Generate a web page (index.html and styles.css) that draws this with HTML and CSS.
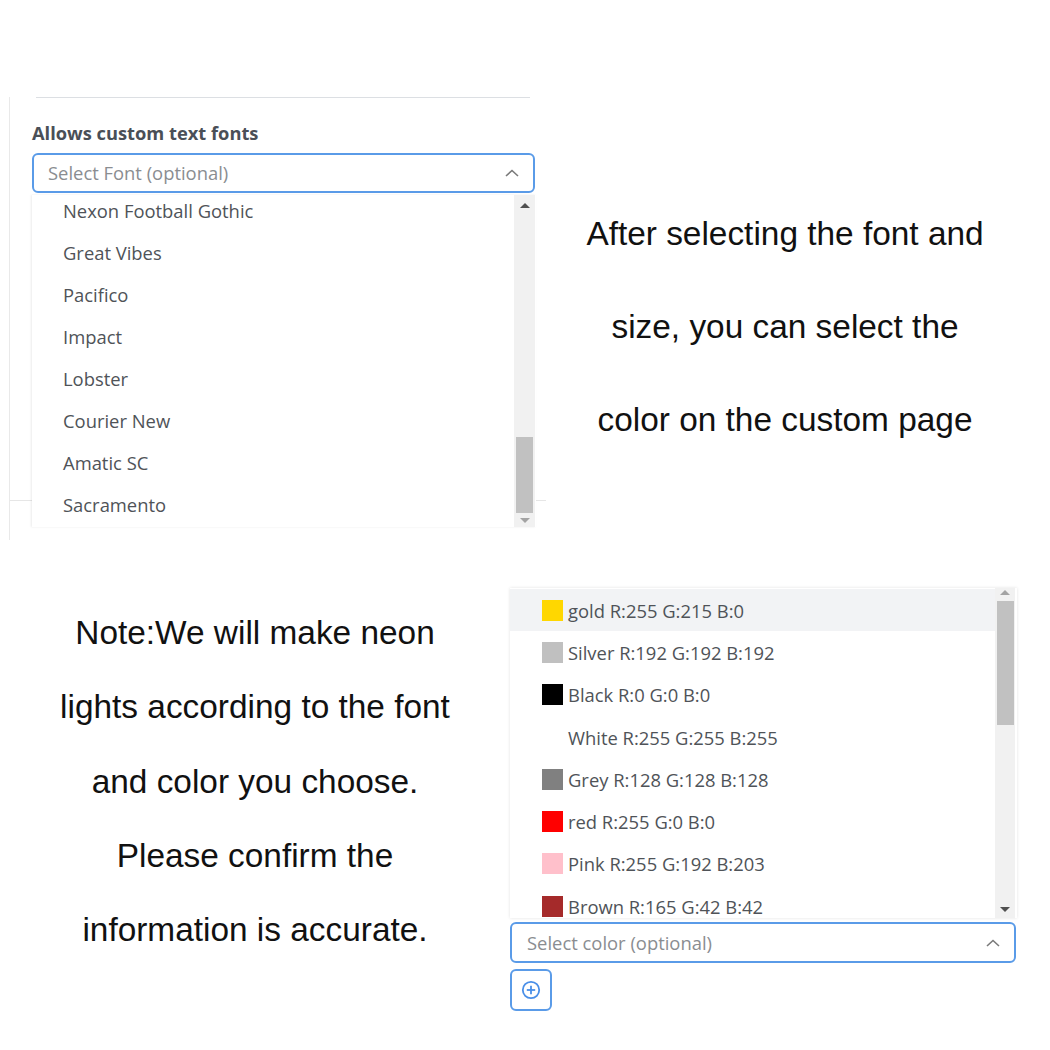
FILE: index.html
```html
<!DOCTYPE html>
<html lang="en">
<head>
<meta charset="utf-8">
<title>Custom fonts and colours</title>
<link rel="stylesheet" href="styles.css">
</head>
<body>
<div class="page">
  <section class="row row-top">
    <div class="font-panel">
      <div class="rule-top"></div>
      <div class="field-label">Allows custom text fonts</div>
      <div class="select select-font">
        <span class="placeholder">Select Font (optional)</span>
        <svg class="chevron" width="14" height="8" viewBox="0 0 14 8"><polyline points="1,7 7,1.5 13,7" fill="none" stroke="#7a7a7a" stroke-width="1.6"/></svg>
      </div>
      <div class="rule-bottom"></div>
      <div class="dropdown font-dropdown">
        <ul class="options font-options">
          <li>Nexon Football Gothic</li>
          <li>Great Vibes</li>
          <li>Pacifico</li>
          <li>Impact</li>
          <li>Lobster</li>
          <li>Courier New</li>
          <li>Amatic SC</li>
          <li>Sacramento</li>
        </ul>
        <div class="scrollbar font-scroll">
          <span class="arrow arrow-up dark"></span>
          <span class="thumb"></span>
          <span class="arrow arrow-down light"></span>
        </div>
      </div>
    </div>
    <div class="blurb blurb-top">
      <p>After selecting the font and</p>
      <p>size, you can select the</p>
      <p>color on the custom page</p>
    </div>
  </section>
  <section class="row row-bottom">
    <div class="blurb blurb-bottom">
      <p>Note:We will make neon</p>
      <p>lights according to the font</p>
      <p>and color you choose.</p>
      <p>Please confirm the</p>
      <p>information is accurate.</p>
    </div>
    <div class="color-panel">
      <div class="dropdown color-dropdown">
        <ul class="options color-options">
          <li class="active"><span class="swatch sw-gold"></span>gold R:255 G:215 B:0</li>
          <li><span class="swatch sw-silver"></span>Silver R:192 G:192 B:192</li>
          <li><span class="swatch sw-black"></span>Black R:0 G:0 B:0</li>
          <li><span class="swatch sw-white"></span>White R:255 G:255 B:255</li>
          <li><span class="swatch sw-grey"></span>Grey R:128 G:128 B:128</li>
          <li><span class="swatch sw-red"></span>red R:255 G:0 B:0</li>
          <li><span class="swatch sw-pink"></span>Pink R:255 G:192 B:203</li>
          <li><span class="swatch sw-brown"></span>Brown R:165 G:42 B:42</li>
        </ul>
        <div class="scrollbar color-scroll">
          <span class="arrow arrow-up light"></span>
          <span class="thumb"></span>
          <span class="arrow arrow-down dark"></span>
        </div>
      </div>
      <div class="select select-color">
        <span class="placeholder">Select color (optional)</span>
        <svg class="chevron" width="14" height="8" viewBox="0 0 14 8"><polyline points="1,7 7,1.5 13,7" fill="none" stroke="#7a7a7a" stroke-width="1.6"/></svg>
      </div>
      <div class="add-btn">
        <svg width="20" height="20" viewBox="0 0 20 20"><circle cx="10" cy="10" r="8.2" fill="none" stroke="#4a8fe8" stroke-width="1.8"/><line x1="10" y1="5.8" x2="10" y2="14.2" stroke="#4a8fe8" stroke-width="1.8"/><line x1="5.8" y1="10" x2="14.2" y2="10" stroke="#4a8fe8" stroke-width="1.8"/></svg>
      </div>
    </div>
  </section>
</div>
</body>
</html>
```

FILE: styles.css
```css
* { box-sizing: border-box; }

body {
  margin: 0;
  background: #fff;
  font-family: "Open Sans", "Noto Sans", sans-serif;
}

.page {
  width: 1050px;
  height: 1050px;
  overflow: hidden;
  display: flex;
  flex-direction: column;
}

.row { display: flex; }
.row-top { height: 548px; flex: none; }
.row-bottom { height: 502px; flex: none; }

/* ---------- font panel ---------- */
.font-panel {
  position: relative;
  margin: 97px 0 0 9px;
  width: 537px;
  height: 443px;
  border-left: 1px solid #e9e9e9;
  flex: none;
}

.rule-top {
  margin-left: 26px;
  width: 494px;
  height: 1px;
  background: #dcdfe3;
}

.field-label {
  margin: 24px 0 0 22px;
  font-size: 18.3px;
  font-weight: 700;
  line-height: 22px;
  color: #4a4f57;
}

.select {
  display: flex;
  align-items: center;
  justify-content: space-between;
  border: 2px solid #5a9be8;
  border-radius: 6px;
  background: #fff;
}

.select-font {
  margin: 9px 0 0 22px;
  width: 503px;
  height: 40px;
  padding: 0 14px 0 14px;
}

.placeholder {
  font-size: 18.4px;
  color: #8a8d91;
  line-height: 24px;
}

.chevron { display: block; }

.rule-bottom {
  margin-top: 307px;
  width: 536px;
  height: 1px;
  background: #e6e6e6;
}

.dropdown {
  display: flex;
  background: #fff;
  overflow: hidden;
}

.font-dropdown {
  position: absolute;
  top: 98px;
  left: 22px;
  width: 504px;
  height: 332px;
  box-shadow: -1px 0 2px rgba(0, 0, 0, 0.08);
}

.options {
  list-style: none;
  margin: 0;
  padding: 0;
  flex: 1;
  font-size: 18.4px;
  color: #4f5358;
}

.options li {
  height: 42px;
  display: flex;
  align-items: center;
  white-space: nowrap;
}

.font-options { margin-top: -6px; }
.font-options li { padding-left: 31px; }

.scrollbar {
  display: flex;
  flex-direction: column;
  align-items: center;
  background: #f1f1f1;
  flex: none;
}

.font-scroll {
  width: 21px;
  margin-right: 1px;
  padding: 8px 0 2px;
}

.arrow {
  width: 0;
  height: 0;
  border-left: 5px solid transparent;
  border-right: 5px solid transparent;
  flex: none;
}
.arrow-up { border-bottom: 5px solid #505050; }
.arrow-down { border-top: 5px solid #505050; }
.arrow-up.light { border-bottom-color: #a3a3a3; }
.arrow-down.light { border-top-color: #a3a3a3; }

.thumb {
  width: 17px;
  background: #c1c1c1;
  flex: none;
}

.font-scroll .thumb { height: 76px; margin: 229px 0 5px; }

/* ---------- blurbs ---------- */
.blurb {
  font-family: "Liberation Sans", Arial, sans-serif;
  font-size: 33.4px;
  color: #111;
  text-align: center;
  flex: none;
}
.blurb p { margin: 0; white-space: nowrap; }

.blurb-top {
  width: 478px;
  margin-top: 187px;
  line-height: 93px;
}

.blurb-bottom {
  width: 510px;
  margin-top: 48px;
  line-height: 74.3px;
}

/* ---------- colour panel ---------- */
.color-panel {
  margin-top: 40px;
  width: 507px;
  flex: none;
  display: flex;
  flex-direction: column;
}

.color-dropdown {
  height: 330px;
  width: 507px;
  box-shadow: 0 0 3px rgba(0, 0, 0, 0.12);
}

.color-options { padding-top: 1px; }
.color-options li {
  height: 42.3px;
  padding-left: 32px;
}
.color-options li.active { background: #f2f3f5; }

.swatch {
  width: 21px;
  height: 21px;
  margin-right: 5px;
  flex: none;
}
.sw-gold { background: #ffd700; }
.sw-silver { background: #c0c0c0; }
.sw-black { background: #000; }
.sw-white { background: #fff; }
.sw-grey { background: #808080; }
.sw-red { background: #ff0000; }
.sw-pink { background: #ffc0cb; }
.sw-brown { background: #a52a2a; }

.color-scroll {
  width: 20px;
  margin-right: 2px;
  padding: 2px 0 6px;
}
.color-scroll .thumb { height: 124px; margin: 6px 0 auto; }

.select-color {
  margin-top: 4px;
  width: 506px;
  height: 41px;
  padding: 0 14px 0 15px;
}

.add-btn {
  margin-top: 6px;
  width: 42px;
  height: 42px;
  border: 2px solid #5a9be8;
  border-radius: 6px;
  display: flex;
  align-items: center;
  justify-content: center;
}
.add-btn svg { display: block; }
```
